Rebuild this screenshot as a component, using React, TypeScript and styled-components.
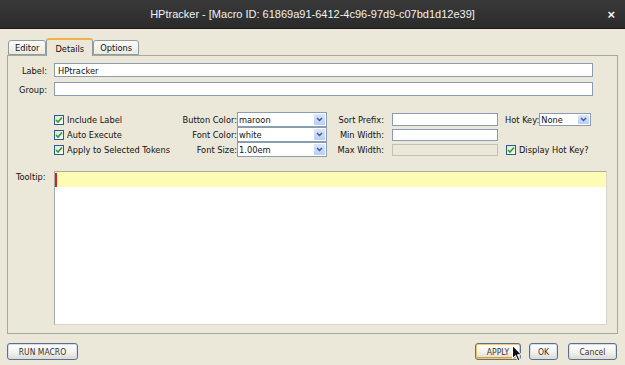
import styled, { createGlobalStyle } from "styled-components"

const GlobalStyle = createGlobalStyle`
  body {
    margin: 0;
    background: #ebe8da;
  }
`

const uiFont = `"DejaVu Sans Condensed", "DejaVu Sans", sans-serif`

const Window = styled.div`
  position: relative;
  display: flex;
  flex-direction: column;
  width: 625px;
  height: 365px;
  background: #ebe8da;
  font-family: ${uiFont};
  font-size: 9.2px;
  color: #111;
  overflow: hidden;
`

const TitleBar = styled.div`
  display: grid;
  grid-template-columns: 1fr auto 1fr;
  align-items: center;
  height: 28px;
  background: linear-gradient(#3a3a3a, #2a2a2a);
  border-bottom: 1px solid #1c1c1c;
  color: #f2f2f2;
  font-family: "Liberation Sans", sans-serif;
  font-size: 11px;
`

const Title = styled.div`
  grid-column: 2;
`

const Close = styled.div`
  justify-self: end;
  margin-right: 10px;
  font-size: 13px;
  font-weight: bold;
`

const Body = styled.div`
  display: flex;
  flex-direction: column;
  padding: 0 7px;
`

const TabRow = styled.div`
  display: flex;
  align-items: flex-end;
  height: 26px;
  padding-left: 1px;
`

const Tab = styled.div<{ active?: boolean }>`
  position: relative;
  height: ${({ active }) => (active ? "18px" : "15px")};
  padding: 0 ${({ active }) => (active ? "8px" : "6px")};
  margin-bottom: ${({ active }) => (active ? "-1px" : "0")};
  display: flex;
  align-items: center;
  box-sizing: border-box;
  border: 1px solid #919b9c;
  border-bottom: ${({ active }) => (active ? "none" : "1px solid #919b9c")};
  border-top: ${({ active }) => (active ? "2px solid #f2b04a" : "1px solid #919b9c")};
  border-radius: 3px 3px 0 0;
  background: ${({ active }) =>
    active ? "#ebe8da" : "linear-gradient(#fbfbf8, #ebe9e0)"};
  z-index: ${({ active }) => (active ? 1 : 0)};
`

const Panel = styled.div`
  display: flex;
  flex-direction: column;
  height: 279px;
  box-sizing: border-box;
  padding: 7px 0 8px 0;
  border: 1px solid #a5a89f;
`

const FieldRow = styled.div<{ gap?: number }>`
  display: grid;
  grid-template-columns: 46px 539px;
  align-items: center;
  height: 14px;
  margin-top: ${({ gap }) => gap ?? 0}px;
`

const RowLabel = styled.span`
  text-align: right;
  padding-right: 7px;
`

const TextInput = styled.input<{ w?: number; h?: number }>`
  box-sizing: border-box;
  width: ${({ w }) => (w ? `${w}px` : "100%")};
  height: ${({ h }) => h ?? 14}px;
  margin: 0;
  padding: 0 3px;
  border: 1px solid #8a9cb0;
  background: #fff;
  font-family: ${uiFont};
  font-size: 9.2px;
  color: #111;
  outline: none;

  &:disabled {
    background: #ebe8da;
    border-color: #c4c1b4;
  }
`

const OptionsGrid = styled.div`
  display: grid;
  grid-template-columns: 120px 63px 90px 57px 114px 95px;
  grid-auto-rows: 15px;
  align-items: center;
  margin: 16px 0 0 46px;
`

const CheckItem = styled.label<{ indent?: number }>`
  display: flex;
  align-items: center;
  gap: 3px;
  padding-left: ${({ indent }) => indent ?? 0}px;
  white-space: nowrap;
`

const Box = styled.span`
  display: inline-flex;
  align-items: center;
  justify-content: center;
  width: 10px;
  height: 10px;
  box-sizing: border-box;
  border: 1px solid #2c5b86;
  background: linear-gradient(135deg, #e0e0da, #fff);
`

const GridLabel = styled.span`
  text-align: right;
  white-space: nowrap;
`

const Combo = styled.div<{ w?: number; h?: number }>`
  display: flex;
  box-sizing: border-box;
  width: ${({ w }) => (w ? `${w}px` : "100%")};
  height: ${({ h }) => h ?? 15}px;
  border: 1px solid #8a9cb0;
  background: #fff;
`

const ComboText = styled.span`
  flex: 1;
  padding-left: 1px;
  display: flex;
  align-items: center;
`

const ComboArrow = styled.span`
  display: flex;
  align-items: center;
  justify-content: center;
  width: 11px;
  margin: 1px;
  background: linear-gradient(#dbe6fd, #b8cdf7);
  border-radius: 1px;
`

const FieldCell = styled.div`
  padding-left: 8px;
`

const HotKey = styled.div`
  display: flex;
  align-items: center;
  padding-left: 7px;
`

const TooltipRow = styled.div`
  flex: 1;
  display: grid;
  grid-template-columns: 46px 553px;
  margin-top: 14px;
`

const TooltipLabel = styled.span`
  padding: 0 0 0 8px;
`

const TextArea = styled.div`
  display: flex;
  flex-direction: column;
  border: 1px solid #a8aba2;
  border-right-color: #d8d6cc;
  border-bottom-color: #d8d6cc;
  background: #fff;
`

const CurrentLine = styled.div`
  height: 15px;
  background: #fdfbb4;
  display: flex;
  align-items: center;
`

const Caret = styled.span`
  width: 2px;
  height: 14px;
  background: #d22020;
`

const Footer = styled.div`
  display: flex;
  align-items: center;
  padding: 9px 1px 0 0;
`

const ButtonGroup = styled.div`
  display: flex;
  gap: 8px;
  margin-left: auto;
`

const Button = styled.button<{ w: number; focused?: boolean; gapLeft?: number }>`
  width: ${({ w }) => w}px;
  height: 17px;
  padding: 0;
  margin-left: ${({ gapLeft }) => gapLeft ?? 0}px;
  border: 1px solid #5f6f86;
  border-radius: 3px;
  background: linear-gradient(#ffffff, #f3f2ec 55%, #dcd8cc);
  box-shadow: ${({ focused }) =>
    focused
      ? "inset 0 0 0 1px #f7c86b, inset 0 -1px 0 1px #e59b35"
      : "inset 0 0 0 1px #d3def3"};
  font-family: ${uiFont};
  font-size: 8.5px;
  color: #333;
`

const Cursor = styled.svg`
  position: absolute;
  left: 512px;
  top: 345px;
`

function Check() {
  return (
    <Box>
      <svg width="8" height="8" viewBox="0 0 8 8">
        <path d="M1 4 L3 6 L7 1.5" stroke="#22a322" strokeWidth="1.6" fill="none" />
      </svg>
    </Box>
  )
}

function Select({ value, w, h }: { value: string; w?: number; h?: number }) {
  return (
    <Combo w={w} h={h}>
      <ComboText>{value}</ComboText>
      <ComboArrow>
        <svg width="7" height="5" viewBox="0 0 7 5">
          <path d="M1 1 L3.5 3.5 L6 1" stroke="#3e5b8c" strokeWidth="1.5" fill="none" />
        </svg>
      </ComboArrow>
    </Combo>
  )
}

export default function App() {
  return (
    <>
      <GlobalStyle />
      <Window>
        <TitleBar>
          <Title>HPtracker - [Macro ID: 61869a91-6412-4c96-97d9-c07bd1d12e39]</Title>
          <Close>×</Close>
        </TitleBar>
        <Body>
          <TabRow>
            <Tab>Editor</Tab>
            <Tab active>Details</Tab>
            <Tab>Options</Tab>
          </TabRow>
          <Panel>
            <FieldRow>
              <RowLabel>Label:</RowLabel>
              <TextInput defaultValue="HPtracker" readOnly />
            </FieldRow>
            <FieldRow gap={5}>
              <RowLabel>Group:</RowLabel>
              <TextInput defaultValue="" readOnly />
            </FieldRow>
            <OptionsGrid>
              <CheckItem>
                <Check />
                Include Label
              </CheckItem>
              <GridLabel>Button Color:</GridLabel>
              <Select value="maroon" />
              <GridLabel>Sort Prefix:</GridLabel>
              <FieldCell>
                <TextInput w={106} h={13} readOnly />
              </FieldCell>
              <HotKey>
                <GridLabel>Hot Key:</GridLabel>
                <Select value="None" w={52} h={13} />
              </HotKey>

              <CheckItem>
                <Check />
                Auto Execute
              </CheckItem>
              <GridLabel>Font Color:</GridLabel>
              <Select value="white" />
              <GridLabel>Min Width:</GridLabel>
              <FieldCell>
                <TextInput w={106} h={12} readOnly />
              </FieldCell>
              <span />

              <CheckItem>
                <Check />
                Apply to Selected Tokens
              </CheckItem>
              <GridLabel>Font Size:</GridLabel>
              <Select value="1.00em" />
              <GridLabel>Max Width:</GridLabel>
              <FieldCell>
                <TextInput w={106} h={12} disabled />
              </FieldCell>
              <CheckItem indent={8}>
                <Check />
                Display Hot Key?
              </CheckItem>
            </OptionsGrid>
            <TooltipRow>
              <TooltipLabel>Tooltip:</TooltipLabel>
              <TextArea>
                <CurrentLine>
                  <Caret />
                </CurrentLine>
              </TextArea>
            </TooltipRow>
          </Panel>
          <Footer>
            <Button w={71}>RUN MACRO</Button>
            <ButtonGroup>
              <Button w={46} focused>APPLY</Button>
              <Button w={29}>OK</Button>
              <Button w={49} gapLeft={2}>Cancel</Button>
            </ButtonGroup>
          </Footer>
        </Body>
        <Cursor width="11" height="17" viewBox="0 0 11 17">
          <path
            d="M0.5 0.5 L0.5 13.5 L3.5 10.5 L6 16 L8 15 L5.5 9.8 L9.5 9.8 Z"
            fill="#111"
            stroke="#fff"
            strokeWidth="1"
          />
        </Cursor>
      </Window>
    </>
  )
}
